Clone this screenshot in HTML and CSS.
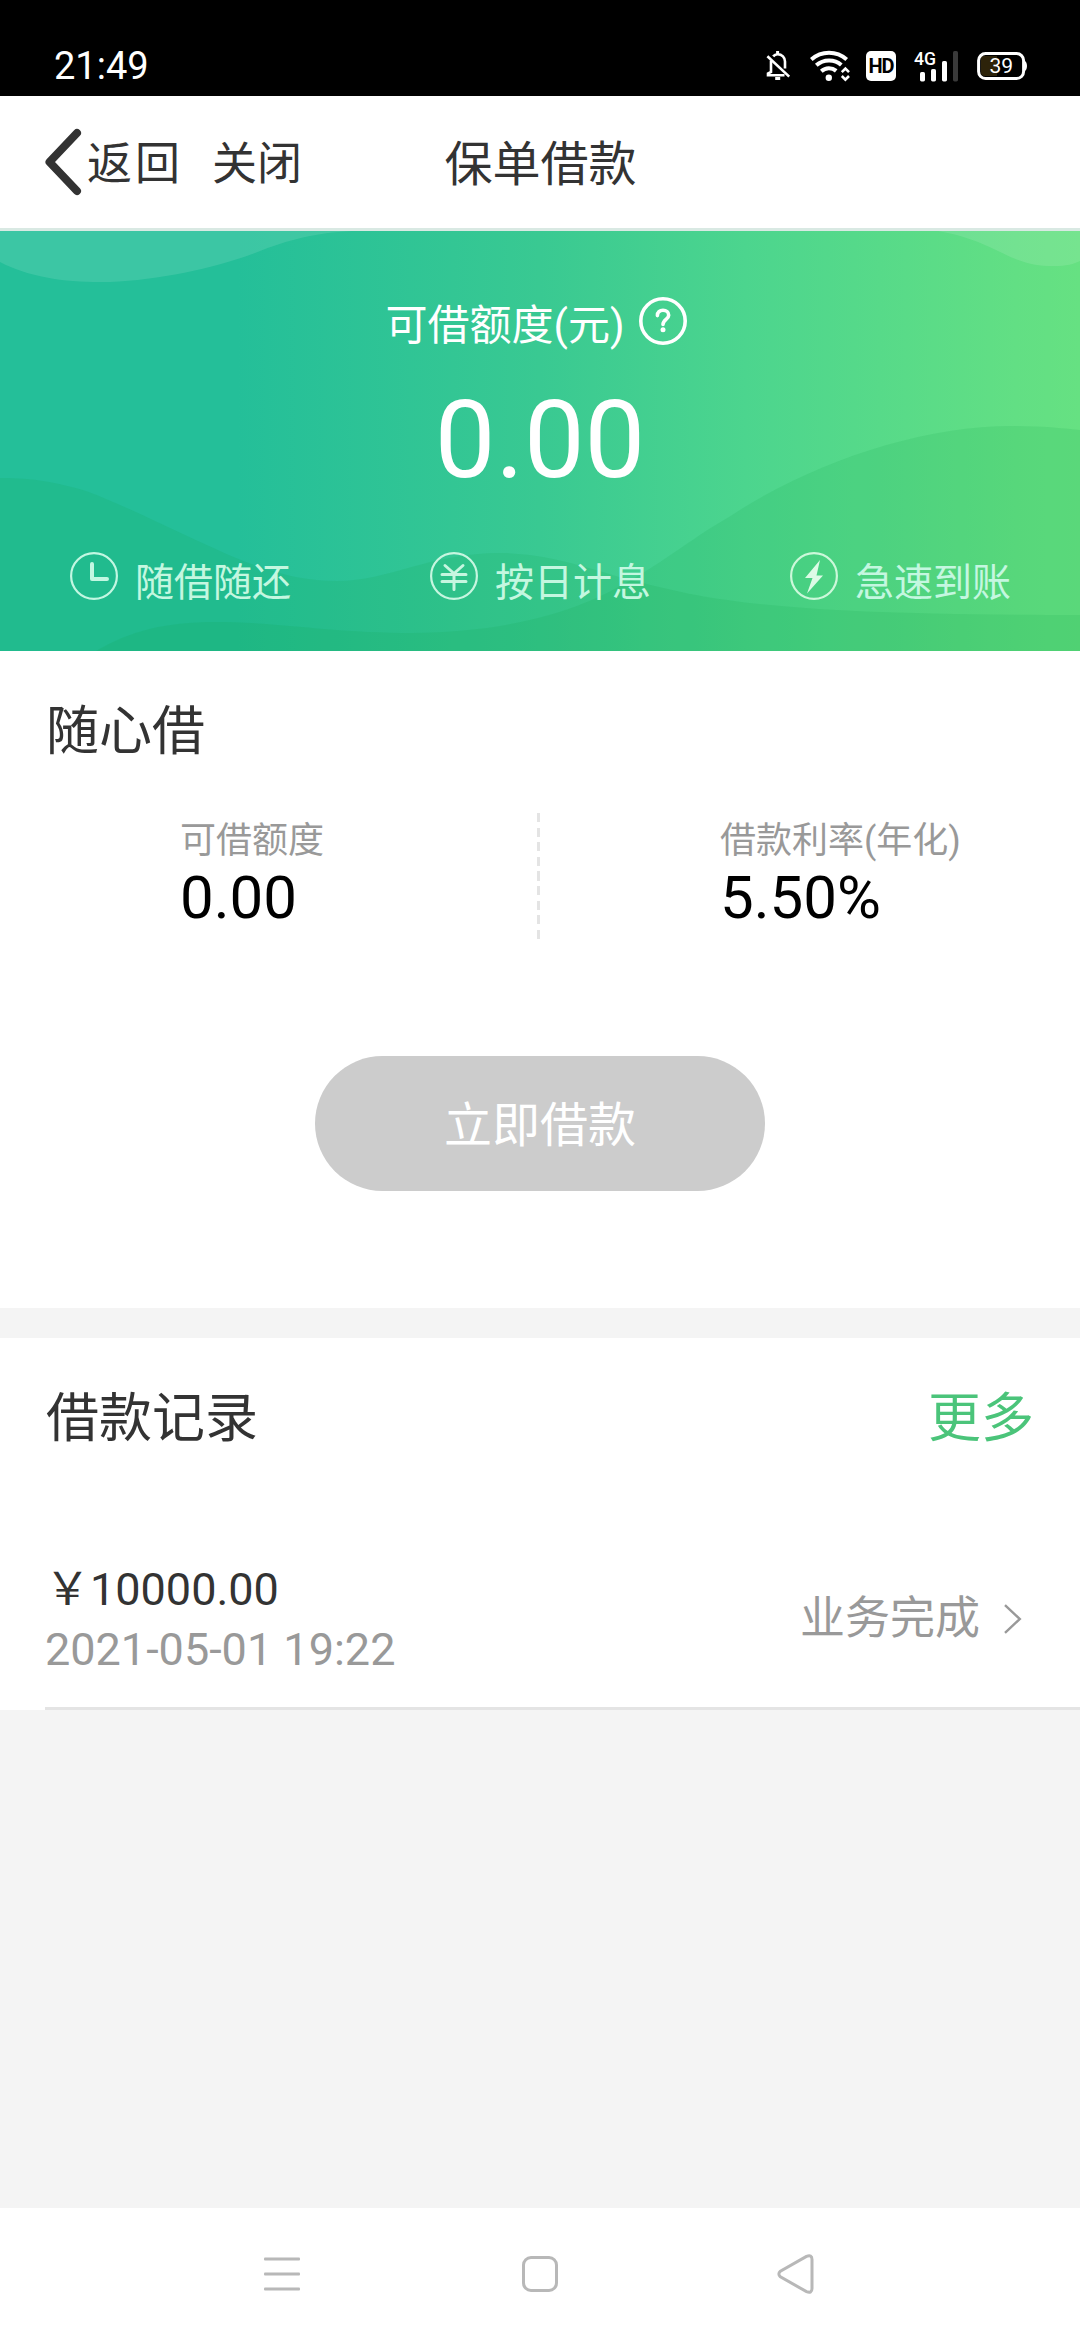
FILE: index.html
```html
<!DOCTYPE html>
<html lang="zh-CN">
<head>
<meta charset="utf-8">
<title>保单借款</title>
<link rel="stylesheet" href="styles.css">
</head>
<body>
<div class="screen">
  <div class="status-bar">
    <span class="clock">21:49</span>
    <div class="status-icons">
      <svg class="icon-bell" width="26" height="32" viewBox="0 0 26 32" fill="none" stroke="#fff" stroke-width="2.6">
        <path d="M6 10.5V22L3 23.6V25.3H19.5M8.2 6.4C9.4 4.8 11 4.2 12.6 4.2C17 4.2 20 7.4 20 11.5V18.6"/>
        <path d="M12.6 1v3M10.2 28.6h5" stroke-width="3"/>
        <path d="M2.4 6.2L24.2 26.6"/>
      </svg>
      <svg class="icon-wifi" width="41" height="32" viewBox="0 0 41 32" fill="none" stroke="#fff" stroke-width="4">
        <path d="M1.3 9.4C11.5 0.4 26.5 0.4 36.7 9.4"/>
        <path d="M6.3 15.3C13.5 8.9 24.5 8.9 31.3 14.9"/>
        <path d="M11.3 21.2C15.7 17.3 21.8 17.3 26.2 20.9"/>
        <circle cx="18.8" cy="27.8" r="3.2" fill="#fff" stroke="none"/>
        <path d="M31.8 22.2L35.4 18.6L39 22.2M31.8 26L35.4 29.6L39 26" stroke-width="2.6"/>
      </svg>
      <span class="badge-hd">HD</span>
      <svg class="icon-signal" width="46" height="40" viewBox="-1 -4 46 40">
        <text class="signal-label" x="0" y="15.2" textLength="22" lengthAdjust="spacingAndGlyphs">4G</text>
        <rect x="6" y="22" width="5" height="9.4" rx="1.6" fill="#fff"/>
        <rect x="17" y="19" width="5" height="12.4" rx="1.6" fill="#fff"/>
        <rect x="28" y="11" width="5" height="20.4" rx="1.6" fill="#fff"/>
        <rect x="39" y="1" width="5" height="30.4" rx="1.6" fill="#3a3a3a"/>
      </svg>
      <svg class="icon-battery" width="51" height="30" viewBox="0 0 51 30">
        <path d="M4 5h16v20H8a4 4 0 0 1-4-4z" fill="#2d230a"/>
        <rect x="1.6" y="2.6" width="45" height="25" rx="7" fill="none" stroke="#fff" stroke-width="3"/>
        <path d="M47 9.5c4 1 4 10 0 11z" fill="#fff"/>
        <text class="battery-label" x="24.3" y="22.4" text-anchor="middle">39</text>
      </svg>
    </div>
  </div>

  <header class="nav-header">
    <div class="nav-left">
      <svg width="42" height="70" viewBox="0 0 42 70" fill="none" stroke="#333" stroke-width="8" stroke-linecap="round" stroke-linejoin="round"><path d="M33 6L5.5 35L33 64"/></svg>
      <span class="nav-back">返回</span>
      <span class="nav-close">关闭</span>
    </div>
    <h1 class="nav-title">保单借款</h1>
  </header>

  <section class="hero">
    <svg class="hero-waves" viewBox="0 0 1080 420" width="1080" height="420" aria-hidden="true">
      <g fill="#fff" fill-opacity=".11">
        <path d="M0 31C30 47 70 52 110 51C160 49 215 37 255 22C290 8 315 2 352 0H0Z"/>
        <path d="M938 0C962 4 980 11 998 20C1018 30 1032 35 1054 35C1066 35 1074 33 1080 30V0Z"/>
      </g>
      <g fill="#0f9f48" fill-opacity=".13">
        <path d="M0 247C35 247 55 251 86 260C130 276 190 308 241 329C280 344 305 350 337 350C390 350 430 321 505 322C560 324 600 342 643 352C720 372 800 384 1080 384V420H0Z"/>
        <path d="M96 420C130 400 165 391 215 391C280 391 330 402 413 402C490 401 555 388 609 361C660 335 690 308 729 286C810 232 920 195 1012 195C1040 195 1060 197 1080 199V420Z"/>
      </g>
    </svg>
    <div class="hero-title">
      <span>可借额度(元)</span>
      <svg width="48" height="48" viewBox="0 0 48 48" fill="none" stroke="#fff" stroke-linecap="round">
        <circle cx="24" cy="24" r="22.2" stroke-width="3.6"/>
        <path d="M18.4 18.6C18.4 15.2 20.7 13.3 24 13.3C27.3 13.3 29.7 15.3 29.7 18.2C29.7 22.2 24 22.6 24 27.4" stroke-width="3.6"/>
        <circle cx="24" cy="32.8" r="2.5" fill="#fff" stroke="none"/>
      </svg>
    </div>
    <div class="hero-amount">0.00</div>
    <div class="features">
      <div class="feature">
        <svg width="48" height="48" viewBox="0 0 48 48" fill="none" stroke="#c2f7e2" stroke-linecap="round" stroke-linejoin="round">
          <circle cx="24" cy="24" r="22.9" stroke-width="2.2"/>
          <path d="M22 12V27H37" stroke-width="4"/>
        </svg>
        <span>随借随还</span>
      </div>
      <div class="feature">
        <svg width="48" height="48" viewBox="0 0 48 48" fill="none" stroke="#c6f6e0" stroke-linecap="round" stroke-linejoin="round">
          <circle cx="24" cy="24" r="22.9" stroke-width="2.2"/>
          <path d="M15 13.5L24 21.5L33 13.5M12 22.6H36M12 29.5H36M24 22V37.5" stroke-width="3"/>
        </svg>
        <span>按日计息</span>
      </div>
      <div class="feature">
        <svg width="48" height="48" viewBox="0 0 48 48">
          <circle cx="24" cy="24" r="22.9" fill="none" stroke="#ccf8da" stroke-width="2.2"/>
          <path d="M30 8L15 26H22.5L17 41.5L33 23.5H26.5Z" fill="#dcfbe6"/>
        </svg>
        <span>急速到账</span>
      </div>
    </div>
  </section>

  <section class="loan">
    <h2 class="section-title">随心借</h2>
    <div class="stats">
      <div class="stat">
        <div class="stat-label">可借额度</div>
        <div class="stat-value">0.00</div>
      </div>
      <div class="divider"></div>
      <div class="stat">
        <div class="stat-label">借款利率(年化)</div>
        <div class="stat-value">5.50%</div>
      </div>
    </div>
    <button class="loan-button" type="button">立即借款</button>
  </section>

  <section class="records">
    <div class="records-head">
      <h2 class="section-title">借款记录</h2>
      <a class="more">更多</a>
    </div>
    <div class="record">
      <div>
        <div class="record-amount">￥10000.00</div>
        <div class="record-date">2021-05-01 19:22</div>
      </div>
      <div class="record-status">
        <span>业务完成</span>
        <svg width="18" height="30" viewBox="0 0 18 30" fill="none" stroke="#999" stroke-width="2.4"><path d="M1 1.2L15.8 15L1 28.8"/></svg>
      </div>
    </div>
  </section>

  <div class="system-nav">
    <svg width="36" height="34" viewBox="0 0 36 34" fill="#b8b8b8"><rect y="0.5" width="36" height="3" rx="1"/><rect y="15.5" width="36" height="3" rx="1"/><rect y="30.5" width="36" height="3" rx="1"/></svg>
    <svg class="nav-home" width="36" height="36" viewBox="0 0 36 36" fill="none" stroke="#b8b8b8" stroke-width="3"><rect x="1.5" y="1.5" width="33" height="33" rx="7.5"/></svg>
    <svg class="nav-prev" width="37" height="40" viewBox="0 0 37 40" fill="none" stroke="#b8b8b8" stroke-width="3"><path d="M29.5 2.4L3.4 17.1Q0.3 20 3.4 22.9L29.5 37.6Q35 39.6 35 34.5V5.5Q35 0.4 29.5 2.4Z"/></svg>
  </div>
</div>
</body>
</html>
```
FILE: styles.css
```css
* {
  box-sizing: border-box;
}

body {
  margin: 0;
  font-family: Roboto, "Noto Sans CJK SC", sans-serif;
  color: #333;
}

h1,
h2 {
  margin: 0;
  font-weight: 400;
}

svg {
  display: block;
  flex: none;
}

.screen {
  display: flex;
  flex-direction: column;
  width: 1080px;
  height: 2340px;
  overflow: hidden;
  background: #f4f4f4;
}

/* Status bar */
.status-bar {
  display: flex;
  justify-content: space-between;
  align-items: flex-start;
  flex: none;
  height: 96px;
  padding: 46px 52px 0 54px;
  background: #000;
  color: #fff;
}

.clock {
  font-size: 38px;
  line-height: 40px;
}

.status-icons {
  display: flex;
  align-items: center;
}

.icon-wifi {
  margin-left: 19px;
}

.badge-hd {
  width: 30px;
  height: 30px;
  margin-left: 15px;
  border-radius: 5px;
  background: #fff;
  color: #000;
  font-size: 20px;
  font-weight: 700;
  line-height: 31px;
  letter-spacing: -1px;
  text-align: center;
}

.icon-signal {
  margin-left: 17px;
}

.signal-label {
  fill: #fff;
  font-size: 19px;
  font-weight: 500;
}

.icon-battery {
  margin-left: 18px;
}

.battery-label {
  fill: #fff;
  font-size: 21px;
}

/* Header */
.nav-header {
  display: grid;
  grid-template-columns: 1fr auto 1fr;
  align-items: center;
  flex: none;
  height: 135px;
  border-bottom: 3px solid #d9e9e3;
  background: #fff;
}

.nav-left {
  display: flex;
  align-items: center;
  padding-left: 44px;
}

.nav-back,
.nav-close {
  padding-top: 6px;
  font-size: 45px;
  line-height: 60px;
}

.nav-back {
  margin-left: 1px;
  letter-spacing: 3px;
}

.nav-close {
  margin-left: 29px;
}

.nav-title {
  padding: 5px 0 0 1px;
  font-size: 48px;
  line-height: 60px;
}

/* Hero */
.hero {
  position: relative;
  flex: none;
  height: 420px;
  padding-top: 65px;
  background: linear-gradient(90deg, #24bf99 0%, #24bf99 22%, #39c992 50%, #4cd58e 69%, #62df84 94%, #66e182 100%);
  color: #fff;
}

.hero-waves {
  position: absolute;
  inset: 0;
}

.hero-title,
.hero-amount,
.features {
  position: relative;
}

.hero-title {
  display: flex;
  justify-content: center;
  align-items: center;
  gap: 14px;
  height: 60px;
  padding-right: 8px;
  font-size: 42px;
  line-height: 60px;
}

.hero-title svg {
  margin-bottom: 10px;
}

.hero-amount {
  margin-top: 21px;
  font-size: 108px;
  line-height: 126px;
  text-align: center;
}

.features {
  display: grid;
  grid-template-columns: repeat(3, 1fr);
  margin-top: 49px;
}

.feature {
  display: flex;
  align-items: flex-start;
  gap: 17px;
  padding-left: 70px;
  color: #c4f7e0;
  font-size: 39px;
  line-height: 48px;
}

.feature span {
  padding-top: 7px;
}

/* Loan summary */
.loan {
  flex: none;
  height: 657px;
  padding-top: 45px;
  background: #fff;
}

.section-title {
  padding-left: 46px;
  font-size: 53px;
  line-height: 72px;
}

.stats {
  display: grid;
  grid-template-columns: 537px 3px 540px;
  height: 126px;
  margin-top: 45px;
}

.stat {
  padding: 1px 0 0 180px;
}

.stat-label {
  color: #999;
  font-size: 36px;
  line-height: 54px;
}

.stat-value {
  color: #000;
  font-size: 60px;
  line-height: 60px;
}

.divider {
  background: repeating-linear-gradient(#e4e4e4 0 9px, transparent 9px 14.625px);
}

.loan-button {
  display: block;
  width: 450px;
  height: 135px;
  margin: 117px auto 0;
  padding: 4px 0 0;
  border: 0;
  border-radius: 68px;
  background: #ccc;
  color: #fff;
  font: inherit;
  font-size: 48px;
  line-height: 60px;
}

/* Records */
.records {
  flex: none;
  height: 372px;
  margin-top: 30px;
  padding-top: 45px;
  background: #fff;
}

.records-head {
  display: flex;
  justify-content: space-between;
  padding-right: 46px;
}

.more {
  color: #4bc47a;
  font-size: 53px;
  line-height: 72px;
}

.record {
  display: flex;
  justify-content: space-between;
  height: 150px;
  margin: 105px 0 0 45px;
  border-bottom: 3px solid #e4e4e4;
  font-size: 45px;
  line-height: 60px;
}

.record-date {
  color: #999;
}

.record-status {
  display: flex;
  align-items: center;
  gap: 24px;
  height: 118px;
  padding-right: 58px;
  color: #999;
}

/* System navigation */
.system-nav {
  display: flex;
  align-items: center;
  flex: none;
  height: 132px;
  margin-top: auto;
  padding-left: 264px;
  background: #fff;
}

.nav-home {
  margin-left: 222px;
}

.nav-prev {
  margin-left: 219px;
}
```
